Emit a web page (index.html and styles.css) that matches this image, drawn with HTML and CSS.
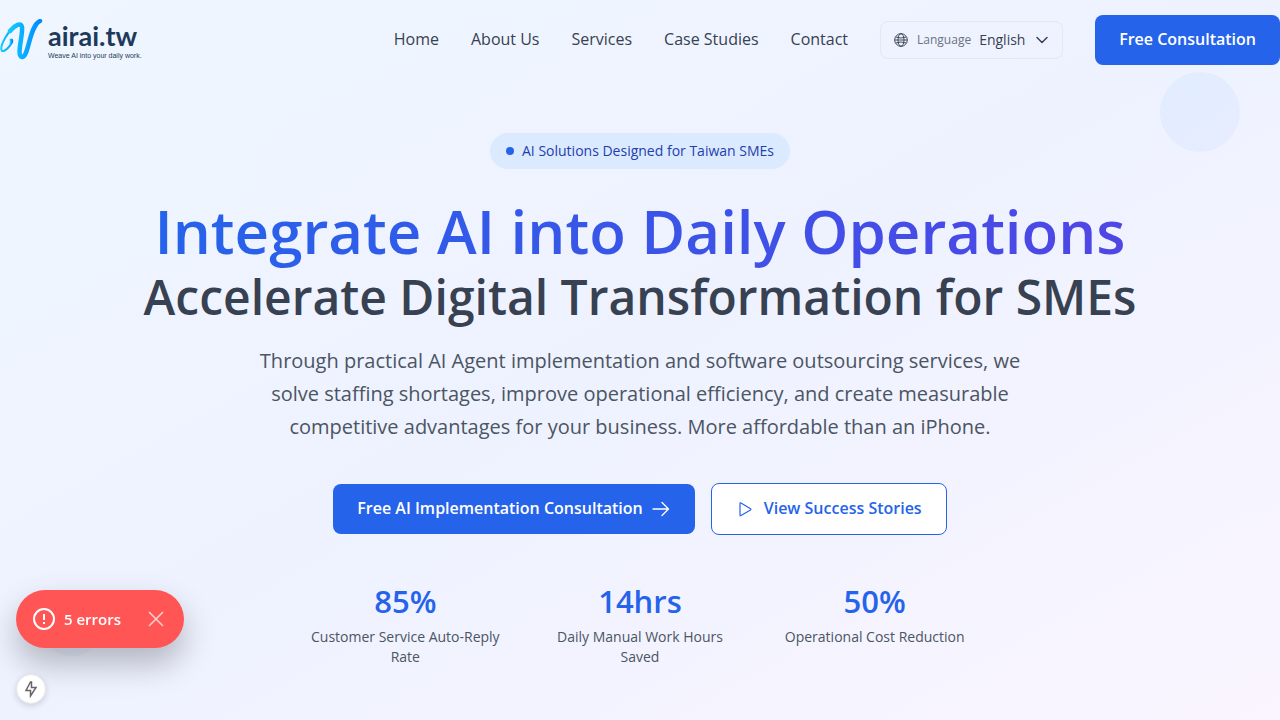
FILE: index.html
```html
<!DOCTYPE html>
<html lang="en">
<head>
<meta charset="utf-8">
<meta name="viewport" content="width=device-width, initial-scale=1">
<title>airai.tw</title>
<link rel="stylesheet" href="styles.css">
</head>
<body>
<div class="page">
  <header class="header">
    <a class="logo" href="#">
      <svg class="logo-mark" viewBox="0 0 43 42" fill="none" stroke-linecap="round" stroke-linejoin="round" aria-hidden="true">
        <defs><linearGradient id="mark" x1="0" y1="0" x2="1" y2="0"><stop offset="0" stop-color="#12c8ff"/><stop offset="1" stop-color="#008cff"/></linearGradient></defs>
        <path d="M12 21 C12 26 5 33 2 32 C-1 28 8 10 18 6" stroke="url(#mark)" stroke-width="2"/>
        <path d="M11 21 C12 21 12 23 11 24" stroke="url(#mark)" stroke-width="3"/>
        <path d="M10 12 C15 6 21 3 22 8 C23 17 16 37 22 38 C29 38 29 7 40 2" stroke="url(#mark)" stroke-width="4.500"/>
      </svg>
      <span class="logo-text">
        <span class="logo-name">airai.tw</span>
        <span class="logo-tagline">Weave AI into your daily work.</span>
      </span>
    </a>
    <nav class="nav">
      <a href="#">Home</a>
      <a href="#">About Us</a>
      <a href="#">Services</a>
      <a href="#">Case Studies</a>
      <a href="#">Contact</a>
      <div class="language">
        <svg class="icon-small" viewBox="0 0 24 24" fill="none" stroke="currentColor" stroke-width="1.400" aria-hidden="true"><circle cx="12" cy="12" r="9.500"/><ellipse cx="12" cy="12" rx="4.500" ry="9.500"/><path d="M4 7.500q8 3 16 0M4 16.500q8-3 16 0M2.500 12h19"/></svg>
        <label for="language">Language</label>
        <select id="language"><option>English</option></select>
        <svg class="icon-chevron" viewBox="0 0 16 16" fill="none" stroke="currentColor" stroke-width="1.500" stroke-linecap="round" stroke-linejoin="round" aria-hidden="true"><path d="M3 5.500l5 5 5-5"/></svg>
      </div>
      <button class="button button-primary" type="button">Free Consultation</button>
    </nav>
  </header>

  <main class="hero">
    <p class="badge"><span class="badge-dot"></span>AI Solutions Designed for Taiwan SMEs</p>
    <h1 class="title">
      <span class="title-main">Integrate AI into Daily Operations</span>
      <span class="title-sub">Accelerate Digital Transformation for SMEs</span>
    </h1>
    <p class="lead">Through practical AI Agent implementation and software outsourcing services, we solve staffing shortages, improve operational efficiency, and create measurable competitive advantages for your business. More affordable than an iPhone.</p>
    <div class="actions">
      <button class="button button-primary" type="button">Free AI Implementation Consultation
        <svg class="icon" viewBox="0 0 20 20" fill="none" stroke="currentColor" stroke-width="1.300" stroke-linecap="round" stroke-linejoin="round" aria-hidden="true"><path d="M2 11h15.500M11 4.500L17.500 11l-6.500 6.500"/></svg>
      </button>
      <button class="button button-outline" type="button">
        <svg class="icon" viewBox="0 0 20 20" fill="none" stroke="currentColor" stroke-width="1.200" stroke-linejoin="round" aria-hidden="true"><path d="M4 5.500v11.500q0 1 1 .5l9.500-5.500q.8-.6 0-1.200L5 5q-1-.5-1 .5z"/></svg>
        View Success Stories
      </button>
    </div>
    <dl class="stats">
      <div class="stat"><dd>85%</dd><dt>Customer Service Auto-Reply Rate</dt></div>
      <div class="stat"><dd>14hrs</dd><dt>Daily Manual Work Hours Saved</dt></div>
      <div class="stat"><dd>50%</dd><dt>Operational Cost Reduction</dt></div>
    </dl>
  </main>

  <span class="bubble bubble-top"></span>
  <span class="bubble bubble-bottom"></span>

  <div class="devtools">
    <div class="toast" role="status">
      <svg class="toast-icon" viewBox="0 0 24 24" fill="none" stroke="currentColor" stroke-width="2" aria-hidden="true"><circle cx="12" cy="12" r="10"/><path d="M12 7v6M12 15v2"/></svg>
      <span>5 errors</span>
      <button class="toast-close" type="button" aria-label="Close">
        <svg viewBox="0 0 16 16" fill="none" stroke="currentColor" stroke-width="1.700" stroke-linecap="round" aria-hidden="true"><path d="M1.500 1.500l13 13M14.500 1.500l-13 13"/></svg>
      </button>
    </div>
    <button class="bolt" type="button" aria-label="Static route">
      <svg viewBox="0 0 14 18" fill="none" stroke="currentColor" stroke-width="1.500" stroke-linejoin="miter" aria-hidden="true"><path d="M6.500 2L2 10.500h4.500V16L12 7.500H7.500V2z"/></svg>
    </button>
  </div>
</div>
</body>
</html>
```
FILE: styles.css
```css
* { box-sizing: border-box; }

body {
  margin: 0;
  font-family: "Open Sans", "Noto Sans", sans-serif;
  font-size: 16px;
  line-height: 24px;
  color: #374151;
}

button, select { font: inherit; color: inherit; }
a { color: inherit; text-decoration: none; }
svg { display: block; flex: none; }
p, h1, dl, dd { margin: 0; }

.page {
  position: relative;
  min-height: 100vh;
  overflow: hidden;
  background: linear-gradient(to bottom right, #eff6ff, #eef2ff, #faf5ff);
}

.header {
  display: flex;
  align-items: center;
  justify-content: space-between;
  height: 80px;
}

.logo { display: flex; align-items: center; gap: 5px; color: #1e3a5a; }
.logo-mark { width: 43px; height: 42px; }
.logo-text { display: flex; flex-direction: column; }
.logo-name { font-family: Lato, sans-serif; font-size: 27px; font-weight: 700; line-height: 32px; }
.logo-tagline { font-family: "Liberation Sans", sans-serif; font-size: 7px; line-height: 8px; }

.nav { display: flex; align-items: center; gap: 32px; white-space: nowrap; }
.nav > a { padding-bottom: 2px; }

.language {
  display: flex;
  align-items: center;
  gap: 8px;
  padding: 6px 12px;
  border: 1px solid #e5e7eb;
  border-radius: 8px;
  font-size: 14px;
}
.language label { font-size: 12px; color: #6b7280; }
.language select {
  appearance: none;
  margin: 0;
  padding: 0;
  border: 0;
  background: none;
}
.icon-small { width: 16px; height: 16px; }
.icon-chevron { width: 16px; height: 16px; }

.button {
  display: inline-flex;
  align-items: center;
  justify-content: center;
  gap: 8px;
  padding: 12px 24px 14px;
  border: 0;
  border-radius: 8px;
  font-weight: 600;
  white-space: nowrap;
}
.button-primary { background: #2563eb; color: #fff; }
.button-outline { border: 1px solid #2563eb; background: #fff; color: #2563eb; }
.icon { width: 20px; height: 20px; }

.hero {
  display: flex;
  flex-direction: column;
  align-items: center;
  padding: 53px 16px 48px;
  text-align: center;
}

.badge {
  display: flex;
  align-items: center;
  gap: 8px;
  padding: 8px 16px;
  border-radius: 18px;
  background: #dbeafe;
  color: #1e40af;
  font-size: 14px;
  line-height: 20px;
}
.badge-dot { width: 8px; height: 8px; border-radius: 50%; background: #2563eb; }

.title { margin-top: 20px; font-weight: 600; }
.title-main, .title-sub { display: block; }
.title-main {
  font-size: 60px;
  line-height: 84px;
  background: linear-gradient(to right, #2563eb, #4f46e5);
  background-clip: text;
  color: transparent;
}
.title-sub { font-size: 48px; line-height: 48px; }

.lead {
  max-width: 800px;
  margin-top: 23px;
  font-size: 20px;
  line-height: 33px;
  color: #4b5563;
}

.actions { display: flex; align-items: center; gap: 16px; margin-top: 40px; }

.stats {
  display: grid;
  grid-template-columns: repeat(3, 1fr);
  gap: 32px;
  width: 100%;
  max-width: 672px;
  margin-top: 46px;
}
.stat dd { font-size: 31px; font-weight: 600; line-height: 40px; color: #2563eb; }
.stat dt { margin-top: 6px; font-size: 14px; line-height: 20px; color: #4b5563; }

.bubble { position: absolute; border-radius: 50%; opacity: 0.5; }
.bubble-top { top: 72px; right: 40px; width: 80px; height: 80px; background: linear-gradient(to bottom right, #d4e8ff, #dde6ff); }
.bubble-bottom { bottom: 64px; left: 40px; width: 64px; height: 64px; background: #e0e7ff; }

.devtools {
  position: fixed;
  left: 16px;
  bottom: 16px;
  display: flex;
  flex-direction: column;
  align-items: flex-start;
  gap: 26px;
}
.toast {
  display: flex;
  align-items: center;
  gap: 8px;
  padding: 17px 20px 17px 16px;
  border-radius: 29px;
  background: #ff5555;
  color: #fff;
  font-size: 15px;
  font-weight: 600;
  box-shadow: 0 16px 32px rgba(0, 0, 0, 0.25);
}
.toast-icon { width: 24px; height: 24px; }
.toast-close { margin-left: 19px; padding: 0; border: 0; background: none; opacity: 0.7; }
.toast-close svg { width: 16px; height: 16px; }
.bolt {
  display: flex;
  align-items: center;
  justify-content: center;
  width: 30px;
  height: 30px;
  padding: 0;
  border: 1px solid #e5e5e5;
  border-radius: 50%;
  background: #fff;
  color: #666;
  box-shadow: 0 2px 6px rgba(0, 0, 0, 0.15);
}
.bolt svg { width: 14px; height: 18px; }
```
